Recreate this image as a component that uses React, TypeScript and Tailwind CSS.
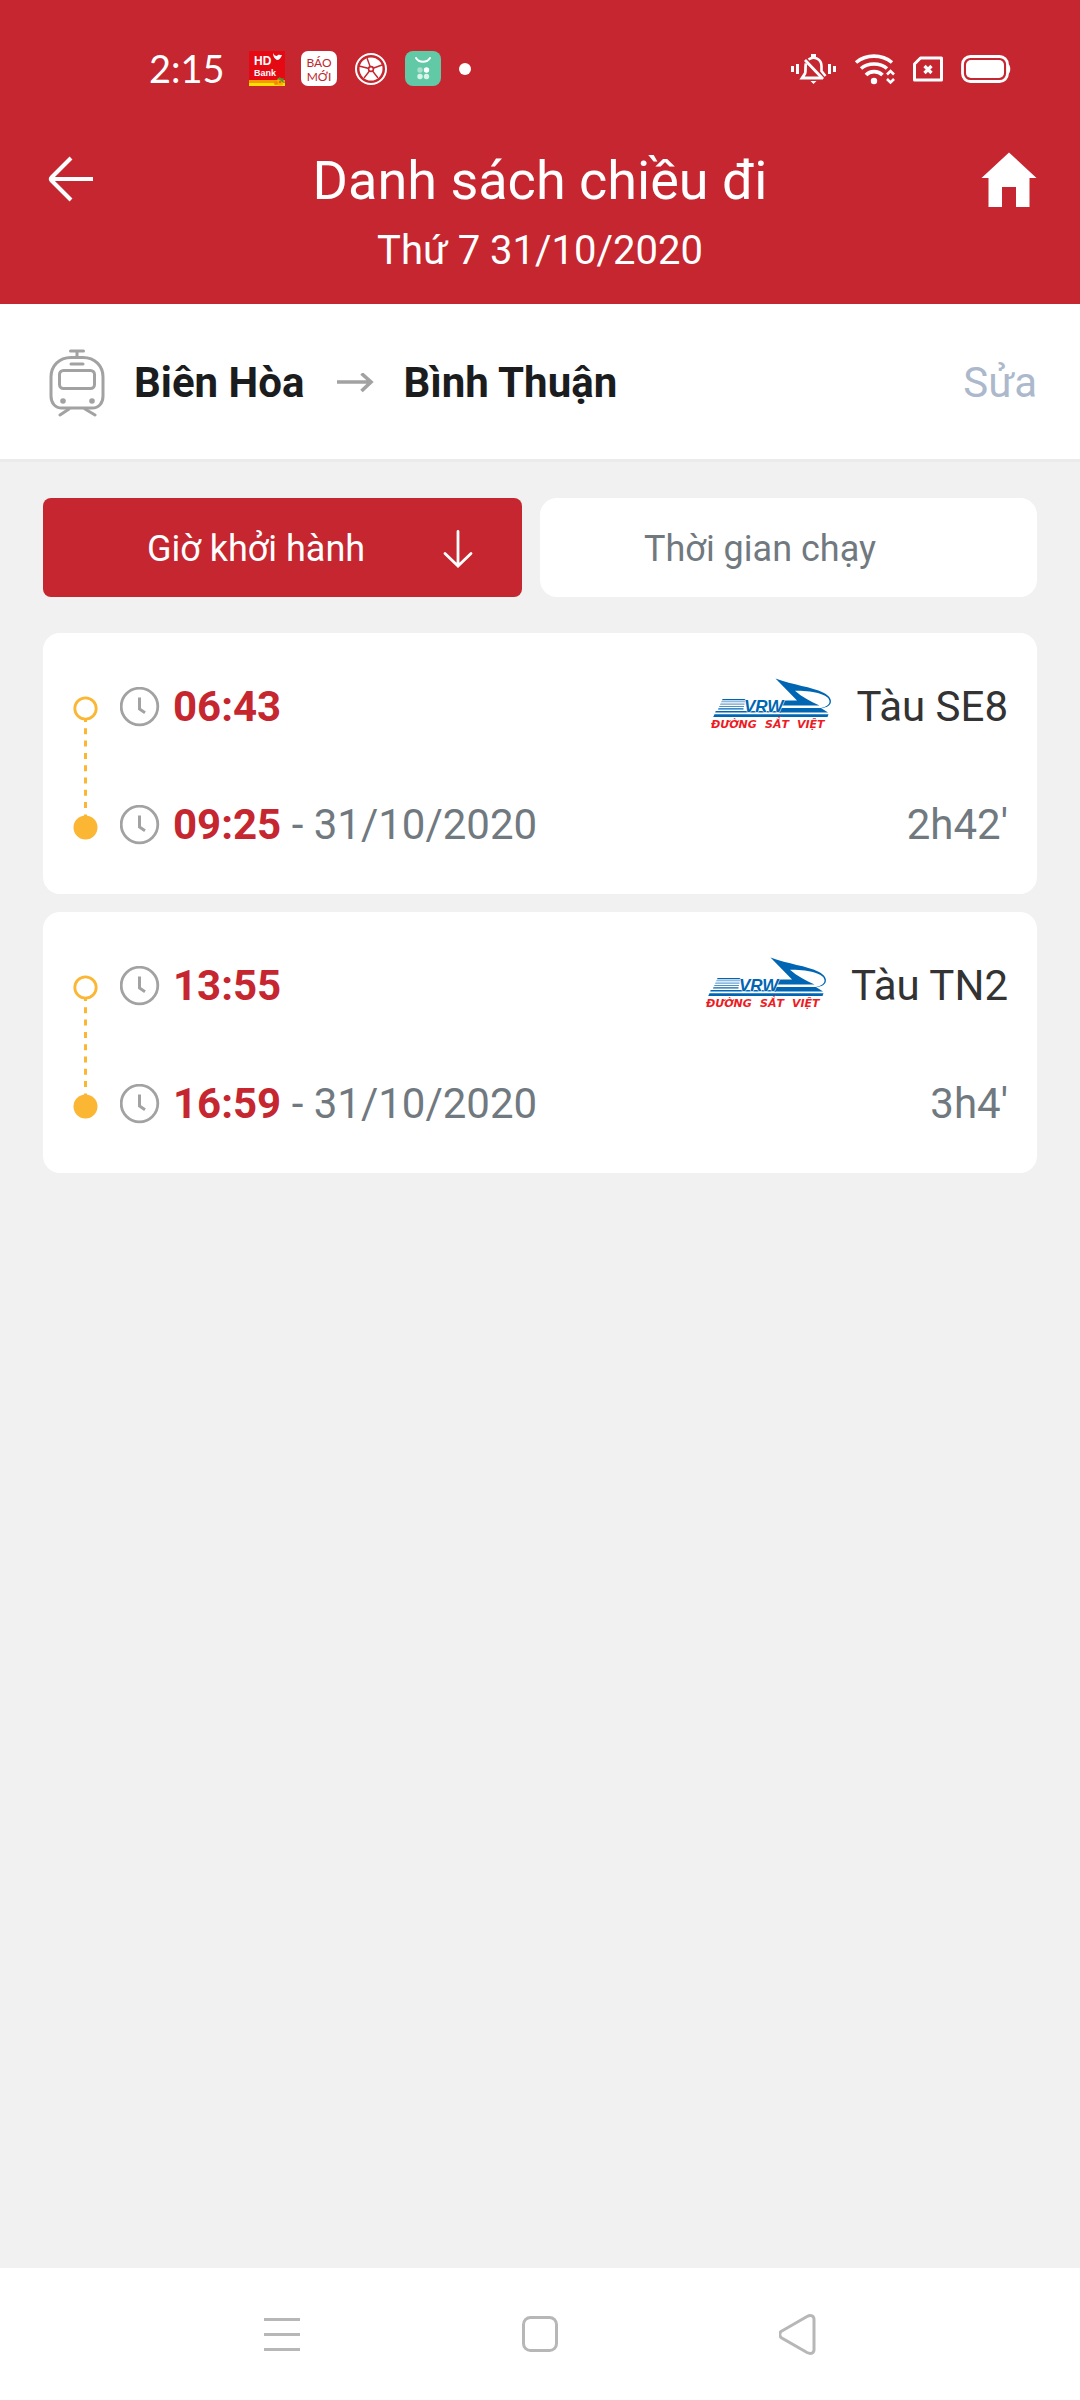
import React from "react";

type Train = {
  depart: string;
  arrive: string;
  date: string;
  name: string;
  duration: string;
};

const trains: Train[] = [
  { depart: "06:43", arrive: "09:25", date: "31/10/2020", name: "Tàu SE8", duration: "2h42'" },
  { depart: "13:55", arrive: "16:59", date: "31/10/2020", name: "Tàu TN2", duration: "3h4'" },
];

function HdBankIcon() {
  return (
    <svg width="36" height="36" viewBox="0 0 36 36" role="img" aria-label="HD Bank">
      <rect width="36" height="30" fill="#e50914" />
      <rect y="29" width="36" height="4" fill="#f59a00" />
      <rect y="32" width="36" height="3" fill="#ffe000" />
      <text x="5" y="14" fill="#fff" fontFamily="Liberation Sans, sans-serif" fontWeight="700" fontSize="12">HD</text>
      <text x="5" y="25" fill="#fff" fontFamily="Liberation Sans, sans-serif" fontWeight="700" fontSize="9">Bank</text>
      <path d="M24 2c1 2 2 3 4 3 1-2 3-1 5-1-1 3-3 5-5 5-2-1-4-3-4-7z" fill="#fff" />
      <circle cx="31" cy="31" r="3.5" fill="#f9b000" />
      <circle cx="27" cy="32" r="2" fill="#f08a00" />
      <path d="M28 28l3-2 1 2 3-1-1 3 2 2-3-1-2-2z" fill="#4b9b2f" />
      <circle cx="31" cy="31" r="1.2" fill="#e06a00" />
    </svg>
  );
}

function BaoMoiIcon() {
  return (
    <svg width="36" height="36" viewBox="0 0 36 36" role="img" aria-label="Báo Mới">
      <rect y="0" width="36" height="35" rx="7" fill="#fff" />
      <text x="18" y="16" textAnchor="middle" fill="#c0262d" fontFamily="Lato, sans-serif" fontWeight="400" fontSize="12">BÁO</text>
      <text x="18" y="30" textAnchor="middle" fill="#c0262d" fontFamily="Lato, sans-serif" fontWeight="400" fontSize="12">MỚI</text>
    </svg>
  );
}

function WheelIcon() {
  return (
    <svg width="36" height="36" viewBox="-1 -1 36 36" fill="none" aria-hidden="true">
      <circle cx="17" cy="17" r="15" stroke="#fff" strokeWidth="2" />
      <circle cx="17" cy="17" r="11.5" fill="#fff" />
      <g stroke="#c6262f" strokeWidth="1.4">
        <path d="M17 17L13 6M17 17l11-4M17 17l7 9M17 17l-7 9M17 17L5 14" />
      </g>
      <circle cx="17" cy="17" r="3.2" fill="#c6262f" />
      <circle cx="17" cy="17" r="1.6" fill="#fff" />
    </svg>
  );
}

function CalculatorIcon() {
  return (
    <svg width="36" height="36" viewBox="0 0 36 36" fill="none" aria-hidden="true">
      <rect width="36" height="35" rx="8" fill="#62c9a7" />
      <path d="M11 7c3 5 11 5 14 0" stroke="#fff" strokeWidth="2" strokeLinecap="round" />
      <circle cx="15" cy="19" r="2.7" fill="#a8e0cd" />
      <circle cx="21.500" cy="19" r="2.7" fill="#fff" />
      <circle cx="15" cy="25.500" r="2.7" fill="#d9f2ea" />
      <circle cx="21.500" cy="25.500" r="2.7" fill="#d9f2ea" />
    </svg>
  );
}

function SilentIcon() {
  return (
    <svg width="46" height="32" viewBox="0 0 46 32" fill="none" stroke="#fff" aria-hidden="true">
      <path d="M2.500 13v6M44.500 13v6" strokeWidth="3" />
      <path d="M7.500 11v10M39.500 11v10" strokeWidth="3" />
      <path d="M18.500 6.500C24 2.500 31.500 6 31.500 13v5l4 5" strokeWidth="2.6" />
      <path d="M16 10.500c-1 3 0 8-1 10l-3 4.500h19" strokeWidth="2.8" />
      <path d="M15 7l18 19" strokeWidth="2.8" />
      <path d="M21 2.500h5" strokeWidth="3" />
      <path d="M20.500 28h6l-3 3z" fill="#fff" stroke="none" />
    </svg>
  );
}

function WifiIcon() {
  return (
    <svg width="41" height="32" viewBox="0 0 41 32" fill="none" stroke="#fff" strokeWidth="3.6" aria-hidden="true">
      <path d="M2 9.500C12 1 28 1 38 9.500" />
      <path d="M7 15.500c7-6 19-6 26 0" />
      <path d="M12 22c4-4.500 12-4.500 16.500 0" />
      <circle cx="20" cy="28" r="3.2" fill="#fff" stroke="none" />
      <path d="M33 21.500l3.500-3.500 3.500 3.500M33 26l3.500 3.500L40 26" strokeWidth="2.6" />
    </svg>
  );
}

function SimIcon() {
  return (
    <svg width="30" height="26" viewBox="0 0 30 26" fill="none" stroke="#fff" aria-hidden="true">
      <path d="M7.500 2h21v22h-27V8z" strokeWidth="3" strokeLinejoin="round" />
      <path d="M11.500 10l7 7M18.500 10l-7 7" strokeWidth="3.2" />
    </svg>
  );
}

function BatteryIcon() {
  return (
    <svg width="50" height="28" viewBox="0 0 50 28" fill="none" aria-hidden="true">
      <rect x="1.500" y="1.500" width="45" height="25" rx="8" stroke="#fff" strokeWidth="2.8" />
      <rect x="5" y="5" width="38" height="18" rx="5" fill="#fff" />
      <path d="M47 9c3 1 3 9 0 10z" fill="#fff" />
    </svg>
  );
}

function StatusBar() {
  return (
    <div className="flex h-[137px] items-center justify-between pl-[149px] pr-[69px]">
      <div className="flex items-center">
        <span className="w-[100px] pb-0.5 font-[Lato,sans-serif] text-[38px] leading-[48px]">2:15</span>
        <div className="flex items-center gap-4">
          <HdBankIcon />
          <BaoMoiIcon />
          <WheelIcon />
          <CalculatorIcon />
          <span className="ml-0.5 size-3 rounded-full bg-white" />
        </div>
      </div>
      <div className="flex items-center gap-[18px]">
        <SilentIcon />
        <WifiIcon />
        <SimIcon />
        <BatteryIcon />
      </div>
    </div>
  );
}

function TrainIcon() {
  return (
    <svg width="56" height="68" viewBox="0 0 56 68" fill="none" stroke="#a2a2a2" strokeWidth="3" strokeLinecap="round" aria-hidden="true">
      <path d="M21.500 2h13M28 2v6" />
      <path d="M22 8.500h12C46 8.500 54 17 54 28v19c0 7-4 12-11 12H13C6 59 2 54 2 47V28C2 17 10 8.500 22 8.500z" />
      <path d="M22 15h12" />
      <rect x="10.500" y="21.500" width="35" height="18" rx="4" />
      <circle cx="14" cy="52" r="2.8" fill="#a2a2a2" stroke="none" />
      <circle cx="43" cy="52" r="2.8" fill="#a2a2a2" stroke="none" />
      <path d="M20 60l-9 6M36 60l10 6" />
    </svg>
  );
}

function ClockIcon() {
  return (
    <svg width="40" height="40" viewBox="0 0 40 40" fill="none" stroke="#a2a2a2" aria-hidden="true">
      <circle cx="19.500" cy="19.500" r="18.300" strokeWidth="2.8" />
      <path d="M19.500 10.500v11.500l5.500 3.700" strokeWidth="3" />
    </svg>
  );
}

function RailLogo() {
  return (
    <svg width="121" height="58" viewBox="0 0 121 58" role="img" aria-label="Đường sắt Việt">
      <g fill="#0066b3">
        <path d="M64.500 0.500C82 7 101 9 112 14.500C119 18 121 22 119.500 25.500C118 28.500 114 30 110 30C115 29 119 26.500 118.500 23C118 17 104 12.500 84 12.800C91 19 100 24 108.500 27.500H70.500L73 22.500H86z" />
        <path d="M69.500 30H110L117 34.500H67.500z" />
        <path d="M4.700 33H70V34.500H4.200z" />
        <path d="M3.500 36.300H117.500L116.500 39H2.200z" />
        <path d="M11.500 21H34.500V22.200H11z" />
        <path d="M9.500 25.500H33.500V26.800H9z" opacity=".6" />
        <path d="M8.500 28H33V29H8z" opacity=".7" />
        <path d="M10.500 23.300H34V24.300H10z" opacity=".6" />
        <path d="M7.500 30.300H32.500V31.500H7z" />
      </g>
      <text x="33" y="34" fill="#0066b3" stroke="#fff" strokeWidth="1" paintOrder="stroke" fontFamily="Liberation Sans, sans-serif" fontWeight="700" fontStyle="italic" fontSize="17">VRW</text>
      <g fill="#ed1c24" fontFamily="DejaVu Sans, sans-serif" fontWeight="700" fontStyle="italic" fontSize="11">
        <text x="0" y="50">ĐƯỜNG</text>
        <text x="54" y="50">SẮT</text>
        <text x="86" y="50">VIỆT</text>
      </g>
    </svg>
  );
}

function JourneyLine() {
  return (
    <svg width="25" height="144" viewBox="0 0 25 144" fill="none" stroke="#fbb634" className="mt-[18px] shrink-0" aria-hidden="true">
      <circle cx="12.500" cy="12.500" r="10.700" strokeWidth="2.8" />
      <path d="M12.500 23v97" strokeWidth="3" strokeDasharray="6 6.300" strokeDashoffset="3" />
      <circle cx="12.500" cy="131.500" r="12" fill="#fbb634" stroke="none" />
    </svg>
  );
}

function TrainCard({ train }: { train: Train }) {
  return (
    <li className="flex items-start gap-[22px] rounded-[17px] bg-white pt-[45px] pr-[29px] pb-10 pl-[30px] text-[42px] leading-[58px]">
      <JourneyLine />
      <div className="flex flex-1 flex-col gap-[60px]">
        <div className="flex items-center">
          <ClockIcon />
          <b className="ml-[13px] font-bold text-[#c6262f]">{train.depart}</b>
          <span className="ml-auto flex items-center gap-6 text-[#333]">
            <RailLogo />
            {train.name}
          </span>
        </div>
        <div className="flex items-center text-[#717980]">
          <ClockIcon />
          <span className="ml-[13px]">
            <b className="font-bold text-[#c6262f]">{train.arrive}</b> - {train.date}
          </span>
          <span className="ml-auto">{train.duration}</span>
        </div>
      </div>
    </li>
  );
}

export default function App() {
  return (
    <div className="flex min-h-screen flex-col bg-[#f1f1f1] font-[Roboto,sans-serif]">
      <header className="bg-[#c6262f] text-white">
        <StatusBar />
        <div className="grid grid-cols-[1fr_auto_1fr] items-start px-[43px] pt-3 pb-[29px]">
          <button type="button" aria-label="Quay lại" className="justify-self-start">
            <svg width="56" height="60" viewBox="0 0 56 60" fill="none" stroke="currentColor" strokeWidth="4" aria-hidden="true">
              <path d="M50 30H9M28 9L8.500 28.500Q7 30 8.500 31.500L28 51" />
            </svg>
          </button>
          <div className="text-center">
            <h1 className="text-[54px] leading-[64px]">Danh sách chiều đi</h1>
            <p className="mt-3.5 text-[40px] leading-[48px]">Thứ 7 31/10/2020</p>
          </div>
          <button type="button" aria-label="Trang chủ" className="justify-self-end">
            <svg width="56" height="62" viewBox="0 0 56 62" fill="currentColor" aria-hidden="true">
              <path d="M28 3.500L55.500 29H48.500V58H35V38H21V58H7.500V29H0.500z" />
            </svg>
          </button>
        </div>
      </header>

      <section className="flex h-[158px] items-center border-b-[3px] border-[#ebebeb] bg-white px-[43px] pt-0.5 text-[42px] leading-[58px] text-[#1b1c1e]">
        <span className="ml-1.5">
          <TrainIcon />
        </span>
        <b className="ml-[29px] font-bold">Biên Hòa</b>
        <svg width="38" height="20" viewBox="0 0 38 20" fill="none" stroke="#a2a2a2" strokeWidth="3.6" className="mr-[29px] ml-8" aria-hidden="true">
          <path d="M1 9h34M25.500 0.500L35 9l-9.500 9" />
        </svg>
        <b className="font-bold">Bình Thuận</b>
        <button type="button" className="ml-auto text-[#acb8cb]">Sửa</button>
      </section>

      <main className="flex flex-1 flex-col gap-9 px-[43px] pt-9">
        <div className="grid grid-cols-[479fr_497fr] gap-[18px] text-[36px] leading-[48px]">
          <button type="button" className="flex h-[99px] items-center gap-[43px] rounded-lg bg-[#c6262f] pt-0.5 pr-12 pl-[70px] text-white">
            <span className="flex-1 text-center">Giờ khởi hành</span>
            <svg width="32" height="38" viewBox="0 0 32 38" fill="none" stroke="currentColor" strokeWidth="2.8" strokeLinecap="round" aria-hidden="true" className="shrink-0">
              <path d="M16 1.500v34M3 23.500l13 12.500 13-12.500" />
            </svg>
          </button>
          <button type="button" className="h-[99px] rounded-[17px] bg-white pt-0.5 pr-[57px] text-center text-[#717980]">
            Thời gian chạy
          </button>
        </div>
        <ul className="flex flex-col gap-[18px]">
          {trains.map((train) => (
            <TrainCard key={train.name} train={train} />
          ))}
        </ul>
      </main>

      <nav className="flex h-[132px] items-center justify-center gap-[220px] bg-white pt-0.5 text-[#b7b7b7]">
        <button type="button" aria-label="Ứng dụng gần đây">
          <svg width="38" height="42" viewBox="0 0 38 42" stroke="currentColor" strokeWidth="3" aria-hidden="true">
            <path d="M1 5.500h36M1 20.500h36M1 35.500h36" />
          </svg>
        </button>
        <button type="button" aria-label="Màn hình chính">
          <svg width="38" height="42" viewBox="0 0 38 42" fill="none" stroke="currentColor" strokeWidth="3" aria-hidden="true">
            <rect x="2.500" y="3.500" width="33" height="33" rx="7" />
          </svg>
        </button>
        <button type="button" aria-label="Trở về">
          <svg width="38" height="42" viewBox="2 0 38 42" fill="none" stroke="currentColor" strokeWidth="3" aria-hidden="true">
            <path d="M4 17.500L30 2.500C34 0.500 37 2 37 5.500V35.500C37 39 34 40.500 30 38.500L4 23.500Q1.500 20.500 4 17.500z" className="overflow-visible" />
          </svg>
        </button>
      </nav>
    </div>
  );
}
